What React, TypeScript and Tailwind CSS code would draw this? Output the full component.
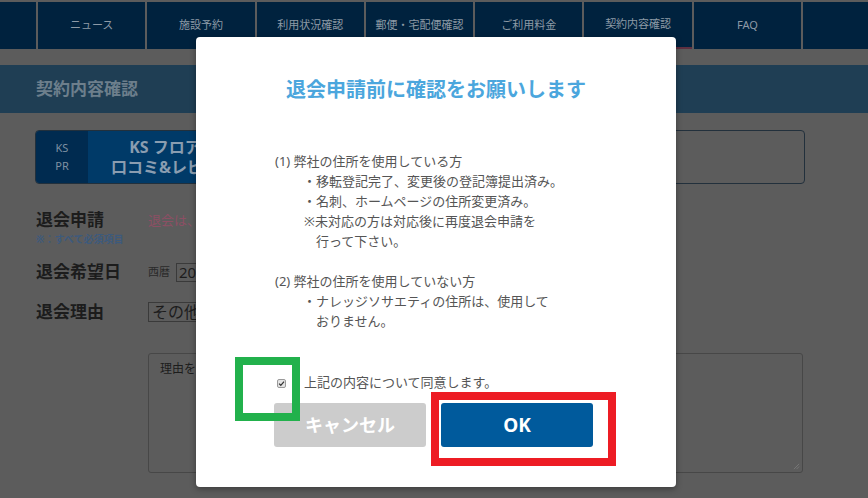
import React from "react";

const navItems = [
  "ニュース",
  "施設予約",
  "利用状況確認",
  "郵便・宅配便確認",
  "ご利用料金",
  "契約内容確認",
  "FAQ",
];

const ConfirmModal = () => {
  const [agreed, setAgreed] = React.useState<boolean>(true);

  return (
    <div className="absolute left-[196px] top-[37px] w-[480px] h-[450px] bg-white rounded-[4px] shadow-[0_2px_6px_rgba(0,0,0,0.35)]">
      <h2 className="pt-[39px] text-center text-[20px] leading-[28px] font-bold text-[#4ba6dd]">
        退会申請前に確認をお願いします
      </h2>

      <div className="mt-[47px] pl-[79px] text-[13px] leading-[20px] text-[#555]">
        <p>(1) 弊社の住所を使用している方</p>
        <p className="pl-[28px]">・移転登記完了、変更後の登記簿提出済み。</p>
        <p className="pl-[28px]">・名刺、ホームページの住所変更済み。</p>
        <p className="pl-[29px]">※未対応の方は対応後に再度退会申請を</p>
        <p className="pl-[41px]">行って下さい。</p>
        <p className="h-[20px]"></p>
        <p>(2) 弊社の住所を使用していない方</p>
        <p className="pl-[28px]">・ナレッジソサエティの住所は、使用して</p>
        <p className="pl-[41px]">おりません。</p>
      </div>

      <label className="mt-[42px] ml-[81px] flex items-center h-[20px] text-[13px] text-[#555] cursor-pointer">
        <span
          onClick={() => setAgreed(!agreed)}
          className="w-[9px] h-[9px] rounded-[2px] border border-[#9a9a9a] bg-[#e4e4e4] flex items-center justify-center"
        >
          {agreed && (
            <svg viewBox="0 0 10 10" className="w-[7px] h-[7px]">
              <path d="M1.5 5.2 L4 7.6 L8.6 2.4" fill="none" stroke="#333" strokeWidth="1.8" />
            </svg>
          )}
        </span>
        <span className="ml-[18px]">上記の内容について同意します。</span>
      </label>

      <div className="mt-[10px] ml-[78px] flex gap-[15px]">
        <button className="w-[152px] h-[44px] rounded-[3px] bg-[#cccccc] text-white text-[18px] font-bold">
          キャンセル
        </button>
        <button className="w-[152px] h-[44px] rounded-[3px] bg-[#005a9c] text-white text-[19px] font-bold">
          OK
        </button>
      </div>
    </div>
  );
};

const App = () => {
  return (
    <div
      className="relative w-[868px] h-[498px] overflow-hidden bg-[#5c5c5c]"
      style={{ fontFamily: '"Noto Sans", "Noto Sans CJK JP", sans-serif' }}
    >
      {/* top navigation */}
      <nav className="pt-[2px] flex gap-[2px] bg-[#5c5c5c]">
        <div className="w-[36px] h-[47px] bg-[#00223e]"></div>
        {navItems.map((item) => (
          <div
            key={item}
            className={
              item === "契約内容確認"
                ? "w-[107.3px] h-[47px] bg-[#00223e] border-b-[2px] border-[#5e3041] flex items-center justify-center text-[11px] text-[#8d9aa6]"
                : "w-[107.3px] h-[47px] bg-[#00223e] flex items-center justify-center text-[11px] text-[#8d9aa6]"
            }
          >
            {item}
          </div>
        ))}
        <div className="flex-1 h-[47px] bg-[#00223e]"></div>
      </nav>

      {/* page heading */}
      <div className="mt-[16px] h-[48px] bg-[#1f3e54] flex items-center pl-[36px]">
        <h1 className="text-[17px] font-bold text-[#6d7f8c]">契約内容確認</h1>
      </div>

      <div className="px-[35px]">
        {/* PR card */}
        <div className="mt-[17px] w-[770px] h-[54px] rounded-[4px] border border-[#22303c] overflow-hidden flex">
          <div className="w-[52px] bg-[#002b50] flex flex-col items-center justify-center text-[11px] leading-[18px] text-[#7f91a2]">
            <span>KS</span>
            <span>PR</span>
          </div>
          <div className="w-[202px] bg-[#003a68] flex flex-col items-center justify-center text-[16px] leading-[20px] font-bold text-[#8a9db0]">
            <span>KS フロアガイド</span>
            <span>口コミ&amp;レビュー投稿</span>
          </div>
          <div className="flex-1"></div>
        </div>

        {/* form */}
        <div className="mt-[24px] grid grid-cols-[113px_1fr]">
          <div className="pl-px">
            <p className="text-[17px] leading-[24px] font-bold text-[#1c1c1c]">退会申請</p>
            <p className="text-[10px] leading-[15px] font-bold text-[#3d5a7c]">※：すべて必須項目</p>
          </div>
          <p className="text-[13px] leading-[24px] text-[#8c4f64]">退会は、</p>

          <p className="mt-[13px] pl-px text-[17px] leading-[24px] font-bold text-[#1c1c1c]">退会希望日</p>
          <div className="mt-[13px] flex items-center h-[24px]">
            <span className="text-[11px] text-[#2a2a2a]">西暦</span>
            <span className="ml-[6px] h-[19px] px-[2px] border border-[#3a3a3a] text-[15px] leading-[17px] text-[#1c1c1c]">
              20
            </span>
          </div>

          <p className="mt-[16px] pl-px text-[17px] leading-[24px] font-bold text-[#1c1c1c]">退会理由</p>
          <div className="mt-[16px] flex items-center h-[24px]">
            <span className="h-[20px] pl-[3px] pr-[40px] border border-[#3a3a3a] text-[16px] leading-[18px] text-[#1c1c1c]">
              その他
            </span>
          </div>

          <div></div>
          <div className="mt-[29px] relative w-[655px] h-[120px] rounded-[3px] border border-[#474747] px-[11px] py-[6px] text-[12px] text-[#1c1c1c]">
            理由を入力してください
            <svg viewBox="0 0 8 8" className="absolute right-[2px] bottom-[2px] w-[7px] h-[7px]">
              <path d="M1 7 L7 1 M4 7 L7 4" stroke="#7a7a7a" strokeWidth="1" />
            </svg>
          </div>
        </div>
      </div>

      <ConfirmModal />

      {/* annotation marks */}
      <div className="absolute left-[235px] top-[357px] w-[65px] h-[64px] border-[8px] border-[#22b14c]"></div>
      <div className="absolute left-[431px] top-[392px] w-[185px] h-[74px] border-[8px] border-[#ed1c24]"></div>
    </div>
  );
};

export default App;
